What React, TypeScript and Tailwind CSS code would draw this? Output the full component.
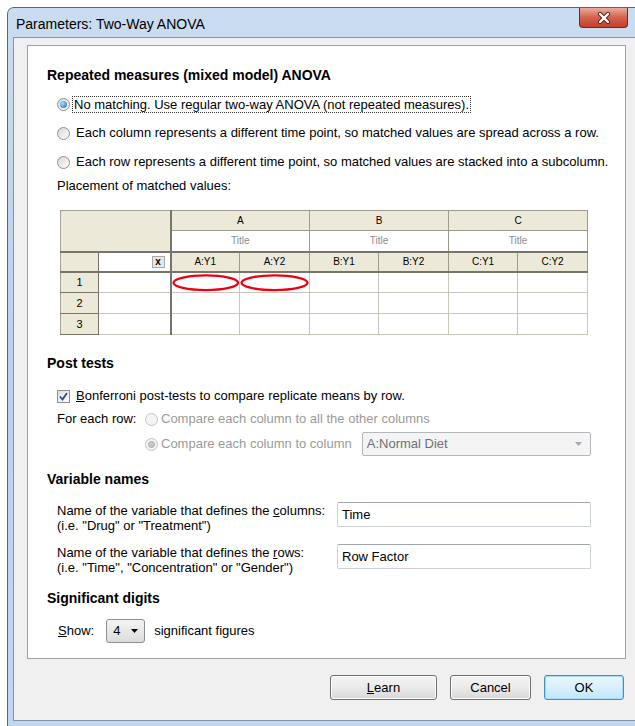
import React from 'react';

const cols = ['A:Y1', 'A:Y2', 'B:Y1', 'B:Y2', 'C:Y1', 'C:Y2'];
const groups = ['A', 'B', 'C'];

function Radio({ checked, disabled }: { checked?: boolean; disabled?: boolean }) {
    return (
        <span
            className={`flex h-[13px] w-[13px] shrink-0 items-center justify-center rounded-full border ${
                disabled
                    ? 'border-[#c4c4c4] bg-[#f4f4f4]'
                    : 'border-[#8e8f8f] bg-linear-to-br from-[#d6d6d6] to-[#ffffff]'
            }`}
        >
            {checked && (
                <span
                    className={`h-[7px] w-[7px] rounded-full ${
                        disabled
                            ? 'border border-[#a9a9a9] bg-[#c9c9c9]'
                            : 'bg-[radial-gradient(circle_at_35%_35%,#a8dcff,#1c5fb0)]'
                    }`}
                />
            )}
        </span>
    );
}

function Checkbox() {
    return (
        <span className="flex h-[13px] w-[13px] shrink-0 items-center justify-center border border-[#8e8f8f] bg-linear-to-br from-[#dcdcdc] to-[#ffffff]">
            <svg width="11" height="11" viewBox="0 0 11 11">
                <path d="M2 5.5 L4.5 8.5 L9 2" fill="none" stroke="#2c4c90" strokeWidth="1.8" />
            </svg>
        </span>
    );
}

function Heading({ children, className = '' }: { children: React.ReactNode; className?: string }) {
    return <h2 className={`h-[18px] text-[14px] font-bold leading-[18px] ${className}`}>{children}</h2>;
}

function ComboArrow({ color }: { color: string }) {
    return (
        <svg width="7" height="4" viewBox="0 0 7 4">
            <polygon points="0,0 7,0 3.5,4" fill={color} />
        </svg>
    );
}

function Ellipse() {
    return (
        <svg
            className="pointer-events-none absolute inset-0 h-full w-full"
            viewBox="0 0 69 20"
            preserveAspectRatio="none"
        >
            <ellipse cx="34.5" cy="10" rx="33" ry="7.5" fill="none" stroke="#ec0012" strokeWidth="2.3" />
        </svg>
    );
}

function DataTable() {
    return (
        <table className="w-[527px] table-fixed border-collapse border border-[#a4a195] text-[10px] leading-none">
            <colgroup>
                <col className="w-[38px]" />
                <col className="w-[72px]" />
                {cols.map((c, i) => (
                    <col key={c} className={i % 2 === 0 ? 'w-[69px]' : 'w-[70px]'} />
                ))}
            </colgroup>
            <tbody>
                <tr className="h-[20px]">
                    <td rowSpan={2} colSpan={2} className="border-r-2 border-b-2 border-[#77746a] bg-[#ece9d8]" />
                    {groups.map(g => (
                        <td key={g} colSpan={2} className="border border-[#9d9a8e] bg-[#ece9d8] text-center">
                            {g}
                        </td>
                    ))}
                </tr>
                <tr className="h-[21px]">
                    {groups.map(g => (
                        <td
                            key={g}
                            colSpan={2}
                            className="border-x border-b-2 border-x-[#9d9a8e] border-b-[#77746a] bg-white text-center text-[#8c8c8c]"
                        >
                            Title
                        </td>
                    ))}
                </tr>
                <tr className="h-[20px]">
                    <td className="border-r border-b-2 border-[#77746a] bg-[#ece9d8]" />
                    <td className="border-r-2 border-b-2 border-[#77746a] bg-white">
                        <div className="flex justify-end pr-[5px]">
                            <span className="flex h-[12px] w-[13px] items-center justify-center border border-[#a9a9a9] bg-[#e8e8e8] text-[10px] font-bold">
                                x
                            </span>
                        </div>
                    </td>
                    {cols.map(c => (
                        <td
                            key={c}
                            className="border-r border-b-2 border-r-[#9d9a8e] border-b-[#77746a] bg-[#ece9d8] text-center"
                        >
                            {c}
                        </td>
                    ))}
                </tr>
                {[1, 2, 3].map(r => (
                    <tr key={r} className="h-[21px]">
                        <td className="border-r border-b border-[#77746a] bg-[#ece9d8] text-center text-[11px]">{r}</td>
                        <td className="border-r-2 border-b border-r-[#77746a] border-b-[#c9c6ba] bg-white" />
                        {cols.map((c, i) => (
                            <td key={c} className="relative border-r border-b border-[#c9c6ba] bg-white">
                                {r === 1 && i < 2 && <Ellipse />}
                            </td>
                        ))}
                    </tr>
                ))}
            </tbody>
        </table>
    );
}

function Button({ children, width, primary }: { children: React.ReactNode; width: string; primary?: boolean }) {
    return (
        <button
            className={`flex h-[25px] items-center justify-center rounded-[3px] border text-[13px] ${width} ${
                primary
                    ? 'border-[#3c8fd0] bg-linear-to-b from-[#eaf6fd] via-[#d9f0fc] to-[#bee6fd] shadow-[inset_0_0_0_1px_#a9dcf7]'
                    : 'border-[#707070] bg-linear-to-b from-[#f3f3f3] via-[#ebebeb] to-[#d8d8d8] shadow-[inset_0_0_0_1px_#fcfcfc]'
            }`}
        >
            {children}
        </button>
    );
}

export default function App() {
    return (
        <div className="relative h-[726px] w-[635px] overflow-hidden bg-white font-['Liberation_Sans',Arial,sans-serif] text-[13px] text-black">
            <div className="ml-[7px] mt-[7px] h-[722px] w-[636px] rounded-t-[7px] border border-[#55677c] bg-linear-to-b from-[#cadcf0] via-[#b9d1eb] to-[#c0d7ef] px-[5px] pb-[5px]">
                {/* title bar */}
                <div className="flex h-[29px] items-start justify-between">
                    <span className="pl-[3px] pt-[8px] text-[14px] leading-[16px]">Parameters: Two-Way ANOVA</span>
                    <button className="mr-[9px] flex h-[20px] w-[49px] items-center justify-center rounded-b-[4px] border border-t-0 border-[#6d2b22] bg-linear-to-b from-[#e9ab9c] via-[#d4614d] to-[#c23e2b]">
                        <svg width="14" height="12" viewBox="0 0 14 12">
                            <path d="M3 2 L11 10 M11 2 L3 10" stroke="#5a2018" strokeWidth="4.2" strokeLinecap="round" />
                            <path d="M3 2 L11 10 M11 2 L3 10" stroke="#ffffff" strokeWidth="2.4" strokeLinecap="round" />
                        </svg>
                    </button>
                </div>

                {/* client area */}
                <div className="h-[684px] border border-[#8394aa] bg-[#f0f0f0] pl-[13px] pt-[7px]">
                    <div className="h-[614px] w-[599px] border border-[#a0a0a0] bg-white pl-[19px] pt-[20px]">
                        <Heading>Repeated measures (mixed model) ANOVA</Heading>
                        <div className="ml-[10px] mt-[10px] flex flex-col gap-[9px]">
                            <div className="flex h-[20px] items-center gap-[6px]">
                                <Radio checked />
                                <span className="-ml-[4px] border border-dotted border-[#333] px-[1px] leading-[15px]">
                                    No matching. Use regular two-way ANOVA (not repeated measures).
                                </span>
                            </div>
                            <div className="flex h-[20px] items-center gap-[6px]">
                                <Radio />
                                <span>Each column represents a different time point, so matched values are spread across a row.</span>
                            </div>
                            <div className="flex h-[20px] items-center gap-[6px]">
                                <Radio />
                                <span>Each row represents a different time point, so matched values are stacked into a subcolumn.</span>
                            </div>
                        </div>
                        <div className="ml-[10px] mt-[5px] h-[18px] leading-[18px]">Placement of matched values:</div>
                        <div className="ml-[13px] mt-[15px]">
                            <DataTable />
                        </div>

                        <Heading className="mt-[19px]">Post tests</Heading>
                        <div className="ml-[10px] mt-[14px] flex h-[20px] items-center gap-[6px]">
                            <Checkbox />
                            <span>
                                <span className="underline">B</span>onferroni post-tests to compare replicate means by row.
                            </span>
                        </div>
                        <div className="ml-[10px] mt-[3px] flex">
                            <div className="h-[20px] w-[88px] leading-[20px]">For each row:</div>
                            <div className="flex flex-col gap-[3px] text-[#9a9a9a]">
                                <div className="flex h-[20px] items-center gap-[3px]">
                                    <Radio disabled />
                                    <span>Compare each column to all the other columns</span>
                                </div>
                                <div className="flex h-[24px] items-center gap-[3px]">
                                    <Radio checked disabled />
                                    <span>Compare each column to column</span>
                                    <div className="ml-[7px] flex h-[24px] w-[229px] items-center justify-between rounded-[2px] border border-[#b4b8bd] bg-[#f4f4f4] pl-[4px] pr-[8px] text-[#707070]">
                                        <span>A:Normal Diet</span>
                                        <ComboArrow color="#a8a8a8" />
                                    </div>
                                </div>
                            </div>
                        </div>

                        <Heading className="mt-[14px]">Variable names</Heading>
                        <div className="ml-[10px] mt-[14px] flex items-start">
                            <div className="w-[280px] pt-[1px] leading-[15px]">
                                <div>
                                    Name of the variable that defines the <span className="underline">c</span>olumns:
                                </div>
                                <div>(i.e. "Drug" or "Treatment")</div>
                            </div>
                            <div className="flex h-[25px] w-[254px] items-center rounded-[2px] border border-[#cdd1d8] border-t-[#a1a5ae] px-[4px]">
                                Time
                            </div>
                        </div>
                        <div className="ml-[10px] mt-[11px] flex items-start">
                            <div className="w-[280px] pt-[1px] leading-[15px]">
                                <div>
                                    Name of the variable that defines the <span className="underline">r</span>ows:
                                </div>
                                <div>(i.e. "Time", "Concentration" or "Gender")</div>
                            </div>
                            <div className="flex h-[25px] w-[254px] items-center rounded-[2px] border border-[#cdd1d8] border-t-[#a1a5ae] px-[4px]">
                                Row Factor
                            </div>
                        </div>

                        <Heading className="mt-[14px]">Significant digits</Heading>
                        <div className="ml-[11px] mt-[12px] flex h-[24px] items-center">
                            <span>
                                <span className="underline">S</span>how:
                            </span>
                            <div className="ml-[12px] flex h-[24px] w-[39px] items-center justify-between rounded-[3px] border border-[#8e8f8f] bg-linear-to-b from-[#f4f4f4] to-[#dcdcdc] pl-[6px] pr-[6px]">
                                <span>4</span>
                                <ComboArrow color="#000000" />
                            </div>
                            <span className="ml-[9px]">significant figures</span>
                        </div>
                    </div>

                    <div className="mt-[16px] flex w-[599px] justify-end gap-[13px] pr-[2px]">
                        <Button width="w-[107px]">
                            <span className="underline">L</span>earn
                        </Button>
                        <Button width="w-[81px]">Cancel</Button>
                        <Button width="w-[80px]" primary>
                            OK
                        </Button>
                    </div>
                </div>
            </div>
        </div>
    );
}
